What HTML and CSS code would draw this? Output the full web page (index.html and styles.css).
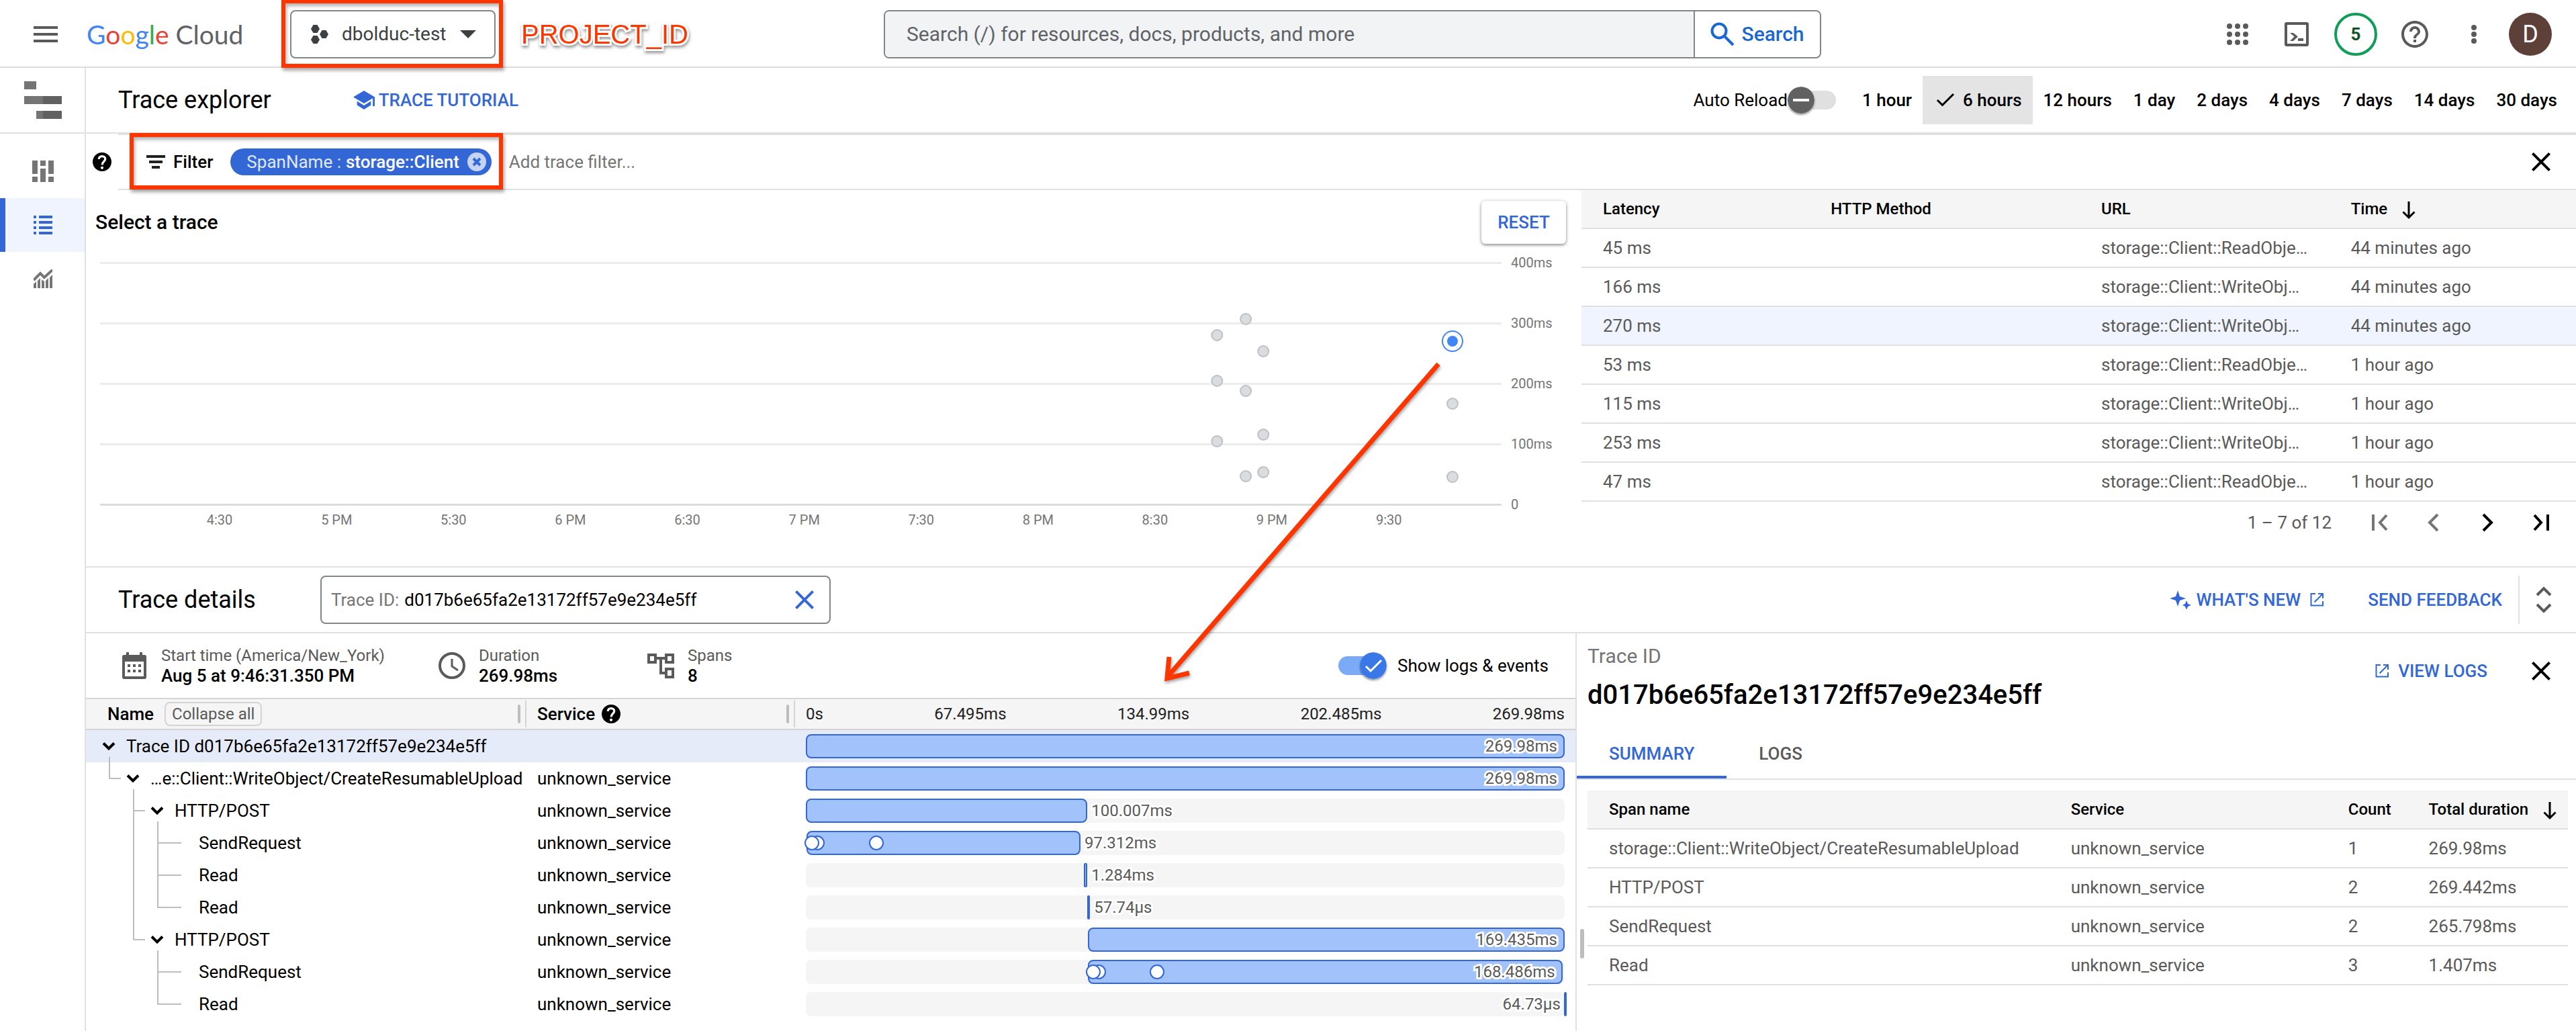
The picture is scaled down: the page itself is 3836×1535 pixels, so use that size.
FILE: index.html
```html
<!DOCTYPE html>
<html lang="en">
<head>
<meta charset="utf-8">
<title>Trace explorer – Google Cloud</title>
<link rel="stylesheet" href="styles.css">
</head>
<body>
<svg class="defs" aria-hidden="true">
  <symbol id="i-close" viewBox="0 0 24 24"><path d="M5.7 5.7l12.6 12.6M18.3 5.7L5.7 18.3" fill="none" stroke="currentColor" stroke-width="2"/></symbol>
  <symbol id="i-help" viewBox="2 2 20 20"><path fill="currentColor" d="M12 2C6.48 2 2 6.48 2 12s4.48 10 10 10 10-4.48 10-10S17.52 2 12 2z"/><circle cx="12" cy="18.3" r="1.5" fill="#fff"/><path fill="none" stroke="#fff" stroke-width="2.3" d="M8.6 9.2C8.6 7.2 10 6 12 6s3.4 1.200 3.400 3c0 2.500-3.300 2.700-3.300 6.200"/></symbol>
  <symbol id="i-down" viewBox="0 0 24 28"><path d="M12 1v24M3.500 16.500L12 25l8.500-8.500" fill="none" stroke="currentColor" stroke-width="3"/></symbol>
  <symbol id="i-chevron" viewBox="0 0 20 14"><path d="M2 2.500l8 8 8-8" fill="none" stroke="currentColor" stroke-width="4"/></symbol>
  <symbol id="i-open" viewBox="0 0 20 20"><path d="M8 1H1.500v17.500H19V12M12 1h7v7M18.500 1.500L6.500 13.500" fill="none" stroke="currentColor" stroke-width="2"/></symbol>
</svg>

<header class="topbar">
  <div class="topbar-left">
    <button class="icon-btn" aria-label="Main menu"><svg width="36" height="24" viewBox="0 0 36 24"><path d="M0 2h36M0 12h36M0 22h36" stroke="#5a5a5a" stroke-width="4"/></svg></button>
    <a class="brand" href="#"><span class="g-blue">G</span><span class="g-red">o</span><span class="g-yellow">o</span><span class="g-blue">g</span><span class="g-green">l</span><span class="g-red">e</span> <span class="g-grey">Cloud</span></a>
    <div class="marked marked-project">
      <button class="project">
        <svg width="26" height="28" viewBox="0 0 26 28" fill="#3c4043"><path d="M3.500 0h6L13 6l-3.500 6h-6L0 6zM3.500 16h6l3.500 6-3.500 6h-6L0 22zM16.500 8h6L26 14l-3.500 6h-6L13 14z"/></svg>
        <span>dbolduc-test</span>
        <svg width="24" height="12" viewBox="0 0 24 12"><path d="M0 0h24L12 12z" fill="#3c4043"/></svg>
      </button>
    </div>
    <span class="note">PROJECT_ID</span>
  </div>
  <form class="search" role="search">
    <input type="search" aria-label="Search" placeholder="Search (/) for resources, docs, products, and more">
    <button type="button"><svg width="36" height="36" viewBox="0 0 36 36" fill="none" stroke="#1967d2" stroke-width="4"><circle cx="13" cy="13" r="10.500"/><path d="M20.500 20.500L34 34"/></svg><span>Search</span></button>
  </form>
  <div class="topbar-right">
    <button class="icon-btn" aria-label="Apps"><svg width="48" height="48" viewBox="0 0 24 24" fill="#5a5a5a"><circle cx="6" cy="6" r="2"/><circle cx="12" cy="6" r="2"/><circle cx="18" cy="6" r="2"/><circle cx="6" cy="12" r="2"/><circle cx="12" cy="12" r="2"/><circle cx="18" cy="12" r="2"/><circle cx="6" cy="18" r="2"/><circle cx="12" cy="18" r="2"/><circle cx="18" cy="18" r="2"/></svg></button>
    <button class="icon-btn" aria-label="Cloud Shell"><svg width="48" height="48" viewBox="0 0 24 24"><rect x="4" y="4" width="16" height="16" rx="0.500" fill="none" stroke="#5a5a5a" stroke-width="2"/><path fill="#5a5a5a" d="M7 11h2.500l3.500 2.800L9.500 17H7l3.300-3.200zM13 15h4v2h-4z"/></svg></button>
    <button class="count" aria-label="Notifications">5</button>
    <button class="icon-btn" aria-label="Help"><svg width="48" height="48" viewBox="0 0 24 24"><path fill="#5a5a5a" d="M11 18h2v-2h-2v2zm1-16C6.480 2 2 6.480 2 12s4.480 10 10 10 10-4.480 10-10S17.520 2 12 2zm0 18c-4.410 0-8-3.590-8-8s3.590-8 8-8 8 3.590 8 8-3.590 8-8 8zm0-14c-2.210 0-4 1.790-4 4h2c0-1.100.9-2 2-2s2 .9 2 2c0 2-3 1.750-3 5h2c0-2.250 3-2.500 3-5 0-2.210-1.790-4-4-4z"/></svg></button>
    <button class="icon-btn" aria-label="More"><svg width="48" height="48" viewBox="0 0 24 24" fill="#5a5a5a"><circle cx="12" cy="7" r="2"/><circle cx="12" cy="12" r="2"/><circle cx="12" cy="17" r="2"/></svg></button>
    <button class="avatar" aria-label="Account">D</button>
  </div>
</header>

<div class="shell">
  <nav class="side">
    <div class="side-logo"><svg width="56" height="56" viewBox="0 0 56 56"><path fill="#757575" d="M0 0h18v12H0zM0 22h28v12H0zM18 44h10v12H18z"/><path fill="#616161" d="M28 22h28v12H28zM28 44h28v12H28z"/></svg></div>
    <a href="#" class="side-item" aria-label="Overview"><svg width="32" height="32" viewBox="0 0 32 32"><path fill="#757575" d="M0 0h8v20H0zM0 24h8v8H0zM12 0h8v8h-8zM12 12h8v20h-8zM24 0h8v20h-8zM24 24h8v8h-8z"/></svg></a>
    <a href="#" class="side-item current" aria-label="Trace explorer"><svg width="28" height="28" viewBox="0 0 28 28"><path fill="#3367d6" d="M0 0h4v4H0zM8 0h20v4H8zM0 8h4v4H0zM8 8h20v4H8zM0 16h4v4H0zM8 16h20v4H8zM0 24h4v4H0zM8 24h20v4H8z"/></svg></a>
    <a href="#" class="side-item" aria-label="Analysis reports"><svg width="28" height="28" viewBox="0 0 28 28"><path fill="none" stroke="#757575" stroke-width="4" d="M0 16L10 6l6 6L28 1"/><path fill="#757575" d="M0 22l4-4v10H0zM6 17l4-4v15H6zM12 15l4 3v10h-4zM18 17l4-4v15h-4zM24 12l4-4v20h-4z"/></svg></a>
  </nav>

  <main class="main">
    <div class="titlebar">
      <h1>Trace explorer</h1>
      <a class="tutorial" href="#"><svg width="32" height="28" viewBox="0 0 34 28" preserveAspectRatio="none" fill="#3367d6"><path d="M17 0L0 9.500 17 19l14-7.800V23h3V9.500zM6 15.500v6L17 28l11-6.500v-6L17 22z"/></svg>TRACE TUTORIAL</a>
      <div class="ranges">
        <label for="reload">Auto Reload</label>
        <span class="switch off"><input type="checkbox" id="reload"><svg width="40" height="40" viewBox="0 0 40 40"><circle cx="20" cy="20" r="20" fill="#616161"/><path d="M8 20h24" stroke="#fff" stroke-width="4"/></svg></span>
        <button class="range first">1 hour</button>
        <button class="range on"><svg width="28" height="22" viewBox="0 0 28 22"><path d="M2 11l7.500 7.500L26 2" fill="none" stroke="#000" stroke-width="3"/></svg>6 hours</button>
        <button class="range">12 hours</button>
        <button class="range">1 day</button>
        <button class="range">2 days</button>
        <button class="range">4 days</button>
        <button class="range">7 days</button>
        <button class="range">14 days</button>
        <button class="range">30 days</button>
      </div>
    </div>

    <div class="filterbar">
      <svg class="help" width="28" height="28"><use href="#i-help"/></svg>
      <div class="filter">
        <div class="marked marked-filter">
          <svg width="28" height="20" viewBox="0 0 28 20"><path d="M0 2h28M4 10h20M8 18h12" stroke="#212121" stroke-width="4"/></svg>
          <label for="filter">Filter</label>
          <span class="chip"><span class="chip-key">SpanName :</span> <b>storage::Client</b>
            <button aria-label="Remove filter"><svg width="28" height="28" viewBox="0 0 28 28"><circle cx="14" cy="14" r="14" fill="#c5d3f4"/><path d="M9 9l10 10M19 9L9 19" stroke="#3367d6" stroke-width="4"/></svg></button></span>
        </div>
        <input id="filter" type="text" placeholder="Add trace filter...">
        <button class="icon-btn" aria-label="Clear filters"><svg width="48" height="48"><use href="#i-close"/></svg></button>
      </div>
    </div>

    <div class="explore">
      <section class="chart">
        <div class="chart-head"><h2>Select a trace</h2><button class="reset">RESET</button></div>
        <div class="chart-body">
          <svg class="plot" width="100%" height="480">
            <g stroke="#ececec" stroke-width="3"><line x1="0" x2="100%" y1="28.500" y2="28.500"/><line x1="0" x2="100%" y1="118.500" y2="118.500"/><line x1="0" x2="100%" y1="208.500" y2="208.500"/><line x1="0" x2="100%" y1="298.500" y2="298.500"/></g>
            <line x1="0" x2="100%" y1="388.500" y2="388.500" stroke="#dcdcdc" stroke-width="3"/>
            <g fill="#dadce0" stroke="#bdc1c6" stroke-width="2">
              <circle cx="79.700%" cy="136" r="8"/><circle cx="79.700%" cy="204" r="8"/><circle cx="79.700%" cy="294" r="8"/>
              <circle cx="81.750%" cy="112" r="8"/><circle cx="81.750%" cy="219" r="8"/><circle cx="81.750%" cy="346" r="8"/>
              <circle cx="83%" cy="160" r="8"/><circle cx="83%" cy="284" r="8"/><circle cx="83%" cy="340" r="8"/>
              <circle cx="96.500%" cy="238" r="8"/><circle cx="96.500%" cy="347" r="8"/>
            </g>
            <circle cx="96.500%" cy="145" r="15" fill="#fff" stroke="#4285f4" stroke-width="2"/><circle cx="96.500%" cy="145" r="8" fill="#4285f4"/>
            <g class="axis" text-anchor="middle">
              <text x="8.530%" y="418">4:30</text><text x="16.880%" y="418">5 PM</text><text x="25.220%" y="418">5:30</text><text x="33.560%" y="418">6 PM</text><text x="41.900%" y="418">6:30</text><text x="50.250%" y="418">7 PM</text><text x="58.590%" y="418">7:30</text><text x="66.930%" y="418">8 PM</text><text x="75.270%" y="418">8:30</text><text x="83.610%" y="418">9 PM</text><text x="91.960%" y="418">9:30</text>
            </g>
          </svg>
          <div class="scale"><span>400ms</span><span>300ms</span><span>200ms</span><span>100ms</span><span>0</span></div>
        </div>
        <svg class="arrow" width="420" height="490" viewBox="0 0 420 490" fill="none" stroke="#ff3500" stroke-width="7"><path d="M413 7L11 471M12 443L9 475L42 467"/></svg>
      </section>

      <section class="traces">
        <table class="grid">
          <colgroup><col class="c-latency"><col class="c-method"><col class="c-url"><col class="c-time"></colgroup>
          <thead><tr><th>Latency</th><th>HTTP Method</th><th>URL</th><th>Time <svg width="24" height="28"><use href="#i-down"/></svg></th></tr></thead>
          <tbody>
            <tr><td>45 ms</td><td></td><td>storage::Client::ReadObje…</td><td>44 minutes ago</td></tr>
            <tr><td>166 ms</td><td></td><td>storage::Client::WriteObj…</td><td>44 minutes ago</td></tr>
            <tr class="picked"><td>270 ms</td><td></td><td>storage::Client::WriteObj…</td><td>44 minutes ago</td></tr>
            <tr><td>53 ms</td><td></td><td>storage::Client::ReadObje…</td><td>1 hour ago</td></tr>
            <tr><td>115 ms</td><td></td><td>storage::Client::WriteObj…</td><td>1 hour ago</td></tr>
            <tr><td>253 ms</td><td></td><td>storage::Client::WriteObj…</td><td>1 hour ago</td></tr>
            <tr><td>47 ms</td><td></td><td>storage::Client::ReadObje…</td><td>1 hour ago</td></tr>
          </tbody>
        </table>
        <div class="pager">
          <span>1 – 7 of 12</span>
          <button class="icon-btn" disabled aria-label="First page"><svg width="48" height="48" viewBox="0 0 48 48" fill="none" stroke="#757575" stroke-width="4"><path d="M14 12v24M34 13L24 24l10 11"/></svg></button>
          <button class="icon-btn" disabled aria-label="Previous page"><svg width="48" height="48" viewBox="0 0 48 48" fill="none" stroke="#757575" stroke-width="4"><path d="M30 12L18 24l12 12"/></svg></button>
          <button class="icon-btn" aria-label="Next page"><svg width="48" height="48" viewBox="0 0 48 48" fill="none" stroke="#000" stroke-width="4"><path d="M18 12l12 12-12 12"/></svg></button>
          <button class="icon-btn" aria-label="Last page"><svg width="48" height="48" viewBox="0 0 48 48" fill="none" stroke="#000" stroke-width="4"><path d="M34 12v24M14 13l10 11-10 11"/></svg></button>
        </div>
      </section>
    </div>

    <div class="details-bar">
      <h1>Trace details</h1>
      <div class="trace-box"><label for="trace-id">Trace ID:</label><input id="trace-id" type="text" value="d017b6e65fa2e13172ff57e9e234e5ff"><button class="icon-btn blue" aria-label="Clear trace ID"><svg width="48" height="48"><use href="#i-close"/></svg></button></div>
      <div class="details-links">
        <a href="#"><svg width="32" height="28" viewBox="0 0 32 28" fill="#3367d6"><path d="M12 0l3 9 9 3-9 3-3 9-3-9-9-3 9-3zM25 15l2 5 5 2-5 2-2 5-2-5-4-2 4-2z"/></svg>WHAT'S NEW<svg class="ext" width="20" height="20"><use href="#i-open"/></svg></a>
        <a class="feedback" href="#">SEND FEEDBACK</a>
        <button class="unfold" aria-label="Resize pane"><svg width="24" height="40" viewBox="0 0 24 40" fill="none" stroke="#5a5a5a" stroke-width="4"><path d="M2 13L12 3l10 10M2 27l10 10 10-10"/></svg></button>
      </div>
    </div>

    <div class="details">
      <section class="spans">
        <div class="facts">
          <div class="fact"><svg width="40" height="40" viewBox="0 0 40 40"><path fill="#5a5a5a" fill-rule="evenodd" d="M8 0h4v4h16V0h4v4h3q3 0 3 3v30q0 3-3 3H5q-3 0-3-3V7q0-3 3-3h3zM6 14v22h28V14z"/><path fill="#5a5a5a" d="M10 18h4v4h-4zM18 18h4v4h-4zM26 18h4v4h-4zM10 26h4v4h-4zM18 26h4v4h-4zM26 26h4v4h-4z"/></svg><p><span>Start time (America/New_York)</span><b>Aug 5 at 9:46:31.350 PM</b></p></div>
          <div class="fact duration"><svg width="40" height="40" viewBox="0 0 40 40" fill="none" stroke="#5a5a5a"><circle cx="20" cy="20" r="18" stroke-width="4"/><path d="M20 10v11l9 6" stroke-width="3"/></svg><p><span>Duration</span><b>269.98ms</b></p></div>
          <div class="fact"><svg width="40" height="40" viewBox="0 0 40 40" fill="none" stroke="#5a5a5a" stroke-width="4"><path d="M2 4h10v11H2zM28 4h10v11H28zM28 25h10v12H28zM12 9h16M20 9v22h8"/></svg><p><span>Spans</span><b>8</b></p></div>
          <div class="events"><span class="switch on"><input type="checkbox" id="events" checked><svg width="40" height="40" viewBox="0 0 40 40"><circle cx="20" cy="20" r="20" fill="#3b78e7"/><path d="M9 21l7 7 16-16" fill="none" stroke="#fff" stroke-width="3"/></svg></span><label for="events">Show logs &amp; events</label></div>
        </div>

        <table class="gantt">
          <colgroup><col class="c-name"><col class="c-service"><col></colgroup>
          <thead><tr>
            <th><div class="head name-head"><span>Name</span><button class="collapse">Collapse all</button><i class="grip"></i><i class="rule"></i></div></th>
            <th><div class="head"><span>Service</span><svg width="28" height="28"><use href="#i-help"/></svg><i class="grip"></i><i class="rule"></i></div></th>
            <th><div class="ticks"><span>0s</span><span>67.495ms</span><span>134.99ms</span><span>202.485ms</span><span>269.98ms</span></div></th>
          </tr></thead>
          <tbody>
            <tr class="picked"><td><div class="node"><button class="toggle stub" aria-label="Collapse"><svg width="20" height="14"><use href="#i-chevron"/></svg></button><span>Trace ID d017b6e65fa2e13172ff57e9e234e5ff</span></div></td><td></td><td><div class="lane clear"><div class="bar" style="left:0;width:100%"><span class="in">269.98ms</span></div></div></td></tr>
            <tr><td><div class="node"><i class="g elbow"></i><button class="toggle stub" aria-label="Collapse"><svg width="20" height="14"><use href="#i-chevron"/></svg></button><span>…e::Client::WriteObject/CreateResumableUpload</span></div></td><td>unknown_service</td><td><div class="lane"><div class="bar" style="left:0;width:100%"><span class="in">269.98ms</span></div></div></td></tr>
            <tr><td><div class="node"><i class="g"></i><i class="g tee"></i><button class="toggle stub" aria-label="Collapse"><svg width="20" height="14"><use href="#i-chevron"/></svg></button><span>HTTP/POST</span></div></td><td>unknown_service</td><td><div class="lane"><div class="bar" style="left:0;width:37.1%"><span class="out">100.007ms</span></div></div></td></tr>
            <tr><td><div class="node"><i class="g"></i><i class="g line"></i><i class="g tee long"></i><span>SendRequest</span></div></td><td>unknown_service</td><td><div class="lane"><div class="bar" style="left:0.1%;width:36.1%"><span class="out">97.312ms</span></div><i class="dot" style="left:1.5%"></i><i class="dot" style="left:0.8%"></i><i class="dot" style="left:9.3%"></i></div></td></tr>
            <tr><td><div class="node"><i class="g"></i><i class="g line"></i><i class="g tee long"></i><span>Read</span></div></td><td>unknown_service</td><td><div class="lane"><div class="bar thin" style="left:36.6%;width:0.5%"><span class="out">1.284ms</span></div></div></td></tr>
            <tr><td><div class="node"><i class="g"></i><i class="g line"></i><i class="g elbow long"></i><span>Read</span></div></td><td>unknown_service</td><td><div class="lane"><div class="bar thin" style="left:37.1%;width:0.1%"><span class="out">57.74µs</span></div></div></td></tr>
            <tr><td><div class="node"><i class="g"></i><i class="g elbow"></i><button class="toggle stub" aria-label="Collapse"><svg width="20" height="14"><use href="#i-chevron"/></svg></button><span>HTTP/POST</span></div></td><td>unknown_service</td><td><div class="lane"><div class="bar" style="left:37.2%;width:62.8%"><span class="in">169.435ms</span></div></div></td></tr>
            <tr><td><div class="node"><i class="g"></i><i class="g"></i><i class="g tee long"></i><span>SendRequest</span></div></td><td>unknown_service</td><td><div class="lane"><div class="bar" style="left:37.2%;width:62.5%"><span class="in">168.486ms</span></div><i class="dot" style="left:38.6%"></i><i class="dot" style="left:37.9%"></i><i class="dot" style="left:46.3%"></i></div></td></tr>
            <tr><td><div class="node"><i class="g"></i><i class="g"></i><i class="g elbow long"></i><span>Read</span></div></td><td>unknown_service</td><td><div class="lane"><div class="bar thin" style="left:99.9%;width:0.1%"><span class="before">64.73µs</span></div></div></td></tr>
          </tbody>
        </table>
      </section>

      <section class="panel">
        <div class="panel-head">
          <div><p class="panel-label">Trace ID</p><h2>d017b6e65fa2e13172ff57e9e234e5ff</h2></div>
          <div class="panel-actions"><a href="#"><svg width="20" height="20"><use href="#i-open"/></svg>VIEW LOGS</a><button class="icon-btn" aria-label="Close panel"><svg width="48" height="48"><use href="#i-close"/></svg></button></div>
        </div>
        <div class="tabs" role="tablist"><button role="tab" class="on" aria-selected="true">SUMMARY</button><button role="tab">LOGS</button></div>
        <i class="side-grip"></i>
        <table class="grid summary">
          <colgroup><col class="c-span"><col class="c-svc"><col class="c-count"><col class="c-total"></colgroup>
          <thead><tr><th>Span name</th><th>Service</th><th>Count</th><th>Total duration <svg width="24" height="28"><use href="#i-down"/></svg></th></tr></thead>
          <tbody>
            <tr><td>storage::Client::WriteObject/CreateResumableUpload</td><td>unknown_service</td><td>1</td><td>269.98ms</td></tr>
            <tr><td>HTTP/POST</td><td>unknown_service</td><td>2</td><td>269.442ms</td></tr>
            <tr><td>SendRequest</td><td>unknown_service</td><td>2</td><td>265.798ms</td></tr>
            <tr><td>Read</td><td>unknown_service</td><td>3</td><td>1.407ms</td></tr>
          </tbody>
        </table>
      </section>
    </div>
  </main>
</div>
</body>
</html>
```
FILE: styles.css
```css
* { box-sizing: border-box; }
body { margin: 0; background: #fff; color: #000; font: 26px/32px Roboto, "Liberation Sans", sans-serif; }
h1, h2, p { margin: 0; }
h1 { font-size: 36px; line-height: 40px; font-weight: 400; }
b { font-weight: 500; }
svg { display: block; flex: none; }
button, input { font: inherit; color: inherit; border: 0; padding: 0; background: none; }
a { color: #3367d6; text-decoration: none; font-weight: 500; }
.defs { position: absolute; width: 0; height: 0; }
.icon-btn { flex: none; }
.blue { color: #3367d6; }

/* Top bar */
.topbar { display: grid; grid-template-columns: 1316fr 1396fr 1124fr; align-items: center; height: 101px; padding-top: 3px; border-bottom: 2px solid #dadce0; }
.topbar-left { display: flex; align-items: center; padding-left: 50px; }
.brand { margin-left: 43px; width: 303px; font: 400 39px/48px Lato, sans-serif; white-space: nowrap; color: #5f6368; }
.g-blue { color: #4285f4; }
.g-red { color: #ea4335; }
.g-yellow { color: #fbbc04; }
.g-green { color: #34a853; }
.g-grey { color: #5f6368; }
.project { display: flex; align-items: center; gap: 20px; width: 306px; height: 72px; padding: 0 27px 0 29px; border: 2px solid #80868b; border-radius: 8px; font-size: 28px; color: #3c4043; }
.project span { flex: 1; text-align: left; white-space: nowrap; }
.marked { position: relative; display: flex; align-items: center; }
.marked::after { content: ""; position: absolute; border: 6px solid #ff3500; box-shadow: 2px 4px 5px rgba(0,0,0,.35), inset 2px 4px 5px rgba(0,0,0,.3); pointer-events: none; }
.marked-project::after { inset: -16px -11px -14px -13px; }
.note { margin-left: 38px; font: 40px/48px "Liberation Sans", sans-serif; color: #ff3500; -webkit-text-stroke: 6px #fff; paint-order: stroke fill; filter: drop-shadow(1px 3px 2px rgba(0,0,0,.4)); }
.search { display: flex; height: 72px; border: 2px solid #80868b; border-radius: 8px; overflow: hidden; font-size: 30px; }
.search input { flex: 1; min-width: 0; padding: 0 32px; background: #f1f3f4; }
.search input::placeholder { color: #5f6368; opacity: 1; }
.search button { display: flex; align-items: center; justify-content: center; gap: 10px; width: 188px; border-left: 2px solid #80868b; color: #1967d2; font-weight: 500; }
.topbar-right { display: flex; align-items: center; justify-content: flex-end; gap: 40px; padding-right: 36px; }
.count { width: 64px; height: 64px; margin: 0 -8px; border: 4px solid #0f9d58; border-radius: 50%; color: #0d5427; font-size: 26px; font-weight: 700; }
.avatar { width: 64px; height: 64px; margin-left: -12px; border-radius: 50%; background: #5d4037; color: #fff; font-size: 36px; }

/* Shell */
.shell { display: flex; min-height: calc(100vh - 101px); }
.side { width: 128px; flex: none; border-right: 2px solid #e0e0e0; }
.side-logo { display: flex; align-items: center; padding-left: 36px; height: 98px; border-bottom: 2px solid #e0e0e0; margin-bottom: 16px; }
.side-item { display: flex; align-items: center; justify-content: center; height: 80px; border-left: 8px solid transparent; padding-right: 6px; }
.side-item.current { background: #f0f4ff; border-color: #3367d6; }
.main { flex: 1; min-width: 0; }

/* Title bar */
.titlebar { display: flex; align-items: center; height: 98px; border-bottom: 2px solid #e0e0e0; padding: 0 12px 0 48px; }
.tutorial { display: flex; align-items: center; gap: 6px; margin-left: 122px; }
.ranges { display: flex; align-items: center; margin-left: auto; height: 72px; }
.range { display: flex; align-items: center; gap: 12px; height: 72px; padding: 0 16px; font-weight: 500; }
.range.first { margin-left: 23px; }
.range.on { background: #e4e4e4; padding-left: 20px; }
.switch { position: relative; display: flex; align-items: center; width: 72px; height: 40px; }
.switch input { appearance: none; margin: 0 2px; width: 68px; height: 28px; border-radius: 14px; background: #e0e0e0; }
.switch svg { position: absolute; top: 0; left: 0; border-radius: 50%; box-shadow: 0 2px 3px rgba(0,0,0,.4); pointer-events: none; }
.switch.on input { margin: 0 4px 0 0; background: #7baaf7; }
.switch.off input { margin: 0 0 0 4px; }
.switch.on svg { left: auto; right: 0; }

/* Filter bar */
.filterbar { display: flex; align-items: center; gap: 10px; padding-left: 10px; }
.filter { flex: 1; display: flex; align-items: center; height: 84px; padding: 0 28px 0 42px; border: solid #e0e0e0; border-width: 2px 0; }
.marked-filter { gap: 12px; font-weight: 500; }
.marked-filter::after { inset: -23px -17px -21px -25px; }
.chip { display: flex; align-items: center; height: 40px; margin-left: 14px; padding: 0 8px 0 24px; border-radius: 20px; background: #3367d6; color: #fff; white-space: pre; }
.chip-key { font-weight: 400; color: #e1e8f8; }
.chip b { margin-left: 7px; }
.chip button { margin-left: 12px; }
.filter > input { flex: 1; padding: 0 26px; }
.filter > input::placeholder { color: #757575; opacity: 1; }

/* Scatter chart */
.explore { display: grid; grid-template-columns: minmax(0, 2227fr) minmax(0, 1481fr); border-bottom: 2px solid #e0e0e0; }
.chart { position: relative; padding-top: 16px; }
.chart-head { display: flex; justify-content: space-between; align-items: center; height: 64px; padding: 0 23px 0 14px; }
.chart-head h2 { font-size: 30px; font-weight: 500; }
.reset { width: 126px; height: 64px; border-radius: 6px; color: #3367d6; font-weight: 500; box-shadow: 0 2px 4px rgba(0,0,0,.4), 0 0 6px rgba(0,0,0,.12); }
.chart-body { display: grid; grid-template-columns: minmax(0, 1fr) 105px; gap: 14px; padding-left: 21px; }
.axis { font-size: 20px; fill: #757575; }
.scale { display: flex; flex-direction: column; justify-content: space-between; height: 398px; padding-top: 18px; font-size: 20px; color: #757575; }
.scale span { line-height: 20px; height: 20px; }
.arrow { position: absolute; right: 206px; top: 252px; pointer-events: none; filter: drop-shadow(1px 3px 2px rgba(0,0,0,.35)); }

/* Data tables */
.grid { width: 100%; table-layout: fixed; border-spacing: 0; }
.grid th, .grid td { height: 58px; padding: 0 0 0 32px; text-align: left; border-bottom: 2px solid #e0e0e0; white-space: nowrap; }
.grid th { background: #f5f5f5; font-size: 24px; font-weight: 500; }
.grid td { color: #5a5a5a; }
.grid th svg { display: inline-block; vertical-align: middle; margin-left: 14px; }
.grid .picked td { background: #f0f4ff; }
.c-latency { width: 22.9%; }
.c-method { width: 27.2%; }
.c-url { width: 25.1%; }
.c-time { width: 24.8%; }
.pager { display: flex; align-items: center; justify-content: flex-end; gap: 32px; height: 62px; padding-right: 28px; color: #5a5a5a; }
.pager span { margin-right: 16px; }

/* Details bar */
.details-bar { display: flex; align-items: center; height: 98px; padding-left: 48px; border-bottom: 2px solid #e0e0e0; }
.trace-box { display: flex; align-items: center; gap: 8px; width: 760px; height: 72px; margin-left: 96px; padding: 0 13px 0 14px; border: 2px solid #80868b; border-radius: 8px; }
.trace-box label { color: #757575; }
.trace-box input { flex: 1; min-width: 0; }
.details-links { display: flex; align-items: center; margin-left: auto; }
.details-links a { display: flex; align-items: center; gap: 8px; }
.ext { margin-left: 6px; }
.details-links .feedback { margin-left: 66px; }
.unfold { display: flex; align-items: center; height: 72px; margin-left: 24px; padding: 0 36px 0 24px; border-left: 2px solid #e0e0e0; }

/* Span timeline */
.details { display: grid; grid-template-columns: minmax(0, 2218fr) minmax(0, 1490fr); min-height: 592px; }
.facts { display: flex; align-items: center; height: 98px; padding: 0 40px 0 52px; border-bottom: 2px solid #d4d4d4; }
.fact { display: flex; align-items: center; gap: 20px; }
.fact p { display: grid; line-height: 30px; font-size: 24px; white-space: nowrap; }
.fact span { color: #5a5a5a; }
.fact b { font-size: 26px; }
.fact.duration { margin: 0 134px 0 80px; }
.events { display: flex; align-items: center; gap: 16px; margin-left: auto; }
.gantt { width: 100%; table-layout: fixed; border-spacing: 0; }
.gantt th { height: 46px; padding: 0; background: #f5f5f5; border-bottom: 2px solid #d4d4d4; font-weight: 500; text-align: left; }
.gantt td { height: 48px; padding: 0 0 0 16px; }
.gantt .picked td { background: #e6ebfa; }
.c-name { width: 656px; }
.c-service { width: 400px; }
.head { display: flex; align-items: center; gap: 10px; height: 44px; padding-left: 16px; }
.name-head { gap: 16px; padding-left: 32px; }
.collapse { height: 36px; padding: 0 9px; border: 2px solid #d4d4d4; border-radius: 8px; font-size: 24px; font-weight: 400; line-height: 30px; color: #5a5a5a; }
.grip { width: 4px; height: 28px; margin-left: auto; border-radius: 2px; background: #bdbdbd; }
.rule { width: 2px; height: 40px; background: #d4d4d4; }
.head .rule { margin-left: -3px; }
.name-head .rule { margin-left: -9px; }
.ticks { display: flex; justify-content: space-between; padding: 0 16px; font-size: 24px; font-weight: 400; color: #212121; }
.node { display: flex; align-items: center; height: 48px; white-space: nowrap; }
.node span { margin-left: 8px; }
.g { position: relative; width: 36px; height: 48px; flex: none; }
.g.long { width: 72px; }
.g::before, .g::after { position: absolute; left: 18px; background: #bdbdbd; }
.line::before, .tee::before { content: ""; top: 0; width: 2px; height: 48px; }
.elbow::before { content: ""; top: 0; width: 2px; height: 24px; }
.tee::after, .elbow::after { content: ""; top: 23px; height: 2px; width: 18px; }
.g.long::after { width: 36px; }
.toggle { position: relative; display: flex; align-items: center; justify-content: center; width: 36px; height: 48px; flex: none; }
.stub::after { content: ""; position: absolute; left: 18px; bottom: 0; width: 2px; height: 8px; background: #bdbdbd; }
.gantt td:last-child { padding-right: 16px; }
.lane { position: relative; height: 36px; border-radius: 8px; background: #f5f5f5; }
.lane.clear { background: none; }
.bar { position: absolute; top: 0; height: 36px; border: 2px solid #3367d6; border-radius: 8px; background: #a1c2fa; }
.bar.thin { min-width: 4px; border-radius: 2px; }
.bar span { position: absolute; top: 0; line-height: 32px; font-size: 24px; color: #5a5a5a; white-space: nowrap; -webkit-text-stroke: 6px #fff; paint-order: stroke fill; }
.in { right: 9px; }
.out { left: calc(100% + 8px); }
.before { right: 7px; }
.dot { position: absolute; top: 7px; width: 22px; height: 22px; margin-left: -11px; border: 2px solid #3367d6; border-radius: 50%; background: #fff; }

/* Trace panel */
.panel { position: relative; border-left: 2px solid #e0e0e0; }
.panel-head { display: flex; justify-content: space-between; height: 138px; padding: 16px 28px 0 16px; }
.panel-label { font-size: 30px; line-height: 36px; color: #757575; }
.panel-head h2 { margin-top: 16px; font-size: 40px; line-height: 48px; font-weight: 500; }
.panel-actions { display: flex; align-items: center; gap: 56px; height: 48px; margin-top: 16px; }
.panel-actions a { display: flex; align-items: center; gap: 14px; }
.tabs { display: flex; height: 80px; border-bottom: 2px solid #e0e0e0; }
.tabs button { padding: 8px 48px 0; border-bottom: 4px solid transparent; font-weight: 500; color: #5a5a5a; }
.tabs .on { color: #3367d6; border-color: #3367d6; }
.side-grip { position: absolute; left: 5px; top: 440px; width: 6px; height: 44px; border-radius: 3px; background: #bdbdbd; }
.summary { width: calc(100% - 28px); margin: 16px 12px 0 16px; }
.c-span { width: 47.1%; }
.c-svc { width: 28.3%; }
.c-count { width: 8.2%; }
.c-total { width: 16.4%; }
```
